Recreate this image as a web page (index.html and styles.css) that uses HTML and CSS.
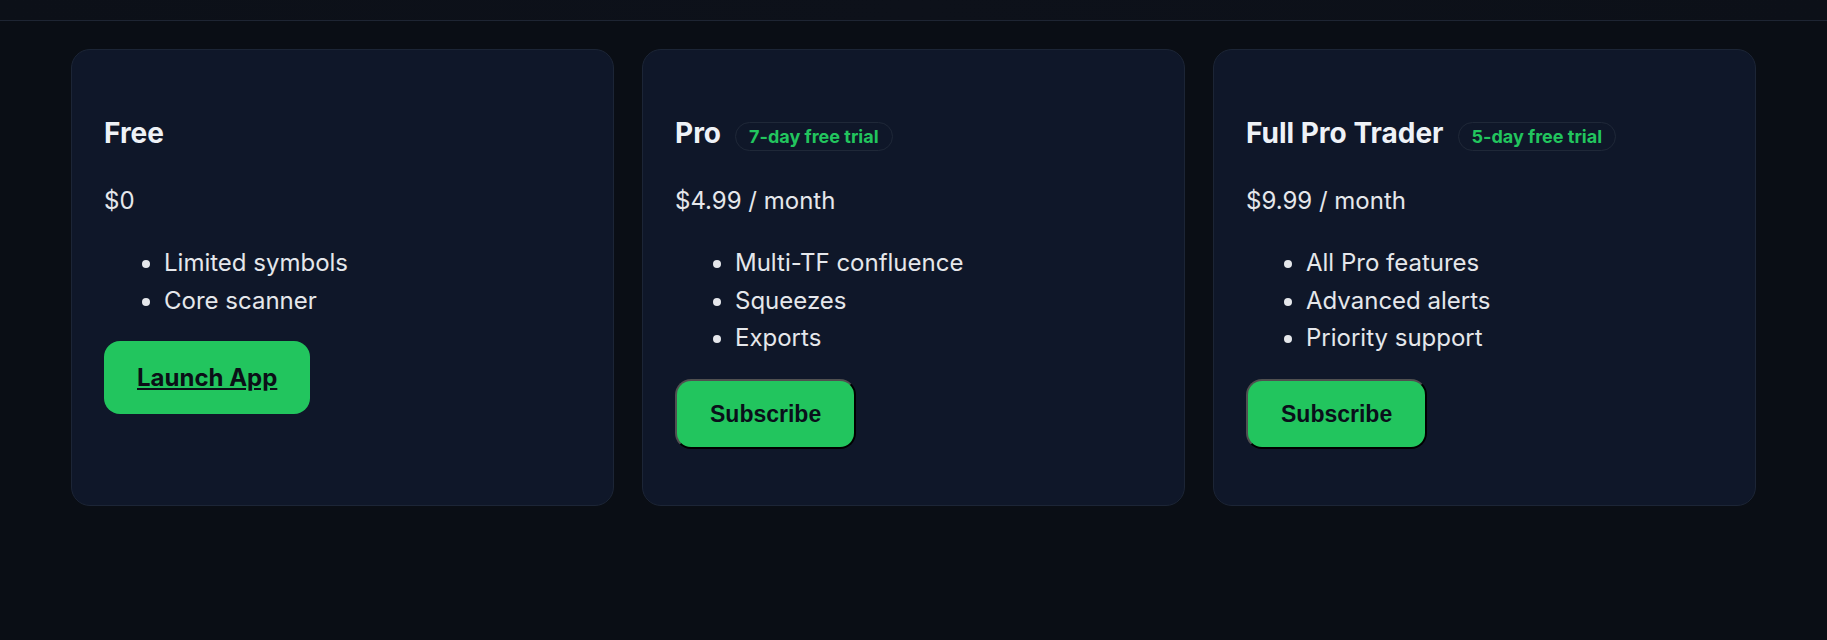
FILE: index.html
```html
<!DOCTYPE html>
<html lang="en">
<head>
<meta charset="utf-8">
<title>Pricing</title>
<link rel="stylesheet" href="styles.css">
</head>
<body>
<header class="topbar"></header>
<main class="plans">
  <section class="card">
    <div class="title-row"><h3 class="plan-name">Free</h3></div>
    <p class="price">$0</p>
    <ul class="features">
      <li>Limited symbols</li>
      <li>Core scanner</li>
    </ul>
    <div class="actions"><a class="launch" href="#">Launch App</a></div>
  </section>
  <section class="card">
    <div class="title-row"><h3 class="plan-name">Pro</h3><span class="badge">7-day free trial</span></div>
    <p class="price">$4.99 / month</p>
    <ul class="features">
      <li>Multi-TF confluence</li>
      <li>Squeezes</li>
      <li>Exports</li>
    </ul>
    <div class="actions"><button class="subscribe" type="button">Subscribe</button></div>
  </section>
  <section class="card">
    <div class="title-row"><h3 class="plan-name">Full Pro Trader</h3><span class="badge">5-day free trial</span></div>
    <p class="price">$9.99 / month</p>
    <ul class="features">
      <li>All Pro features</li>
      <li>Advanced alerts</li>
      <li>Priority support</li>
    </ul>
    <div class="actions"><button class="subscribe" type="button">Subscribe</button></div>
  </section>
</main>
</body>
</html>
```
FILE: styles.css
```css
html, body {
  margin: 0;
  padding: 0;
}
body {
  background: #0a0e15;
  color: #e5e7eb;
  font-family: Inter, "Noto Sans", sans-serif;
  font-size: 24px;
  line-height: 1.57;
  min-height: 640px;
}
.topbar {
  height: 20px;
  background: linear-gradient(90deg, #0c1018, #0d111a 50%, #0c1018);
  border-bottom: 1px solid #1e2533;
}
.plans {
  display: grid;
  grid-template-columns: repeat(3, 1fr);
  gap: 28px;
  max-width: 1685px;
  margin: 28px auto 0;
}
.card {
  background: #0f1729;
  border: 1px solid #1c2536;
  border-radius: 19px;
  padding: 32px;
}
.title-row {
  display: flex;
  align-items: baseline;
  gap: 14px;
  margin: 30px 0 27px;
}
.plan-name {
  margin: 0;
  font-size: 28px;
  font-weight: 700;
  line-height: 1.55;
  color: #eef2f7;
}
.badge {
  font-size: 18px;
  font-weight: 700;
  line-height: 21px;
  color: #22c55e;
  border: 1px solid #1f2838;
  border-radius: 999px;
  padding: 3px 13px;
}
.price {
  margin: 0 0 24px;
}
.features {
  margin: 0 0 22px;
  padding-left: 60px;
}
.actions {
  margin: 22px 0 24px;
}
.launch {
  display: inline-block;
  background: #22c55e;
  color: #0b0f17;
  font-weight: 700;
  font-size: 24px;
  line-height: 36px;
  padding: 18.5px 33px;
  border-radius: 16px;
  text-decoration: underline;
}
.subscribe {
  background: #22c55e;
  color: #0a0f1a;
  font-family: "Liberation Sans", Arial, sans-serif;
  font-weight: 700;
  font-size: 23px;
  line-height: 26px;
  padding: 20px 33px;
  border-style: solid;
  border-width: 2px;
  border-color: #505050 #000 #000 #505050;
  border-radius: 16px;
}
```
